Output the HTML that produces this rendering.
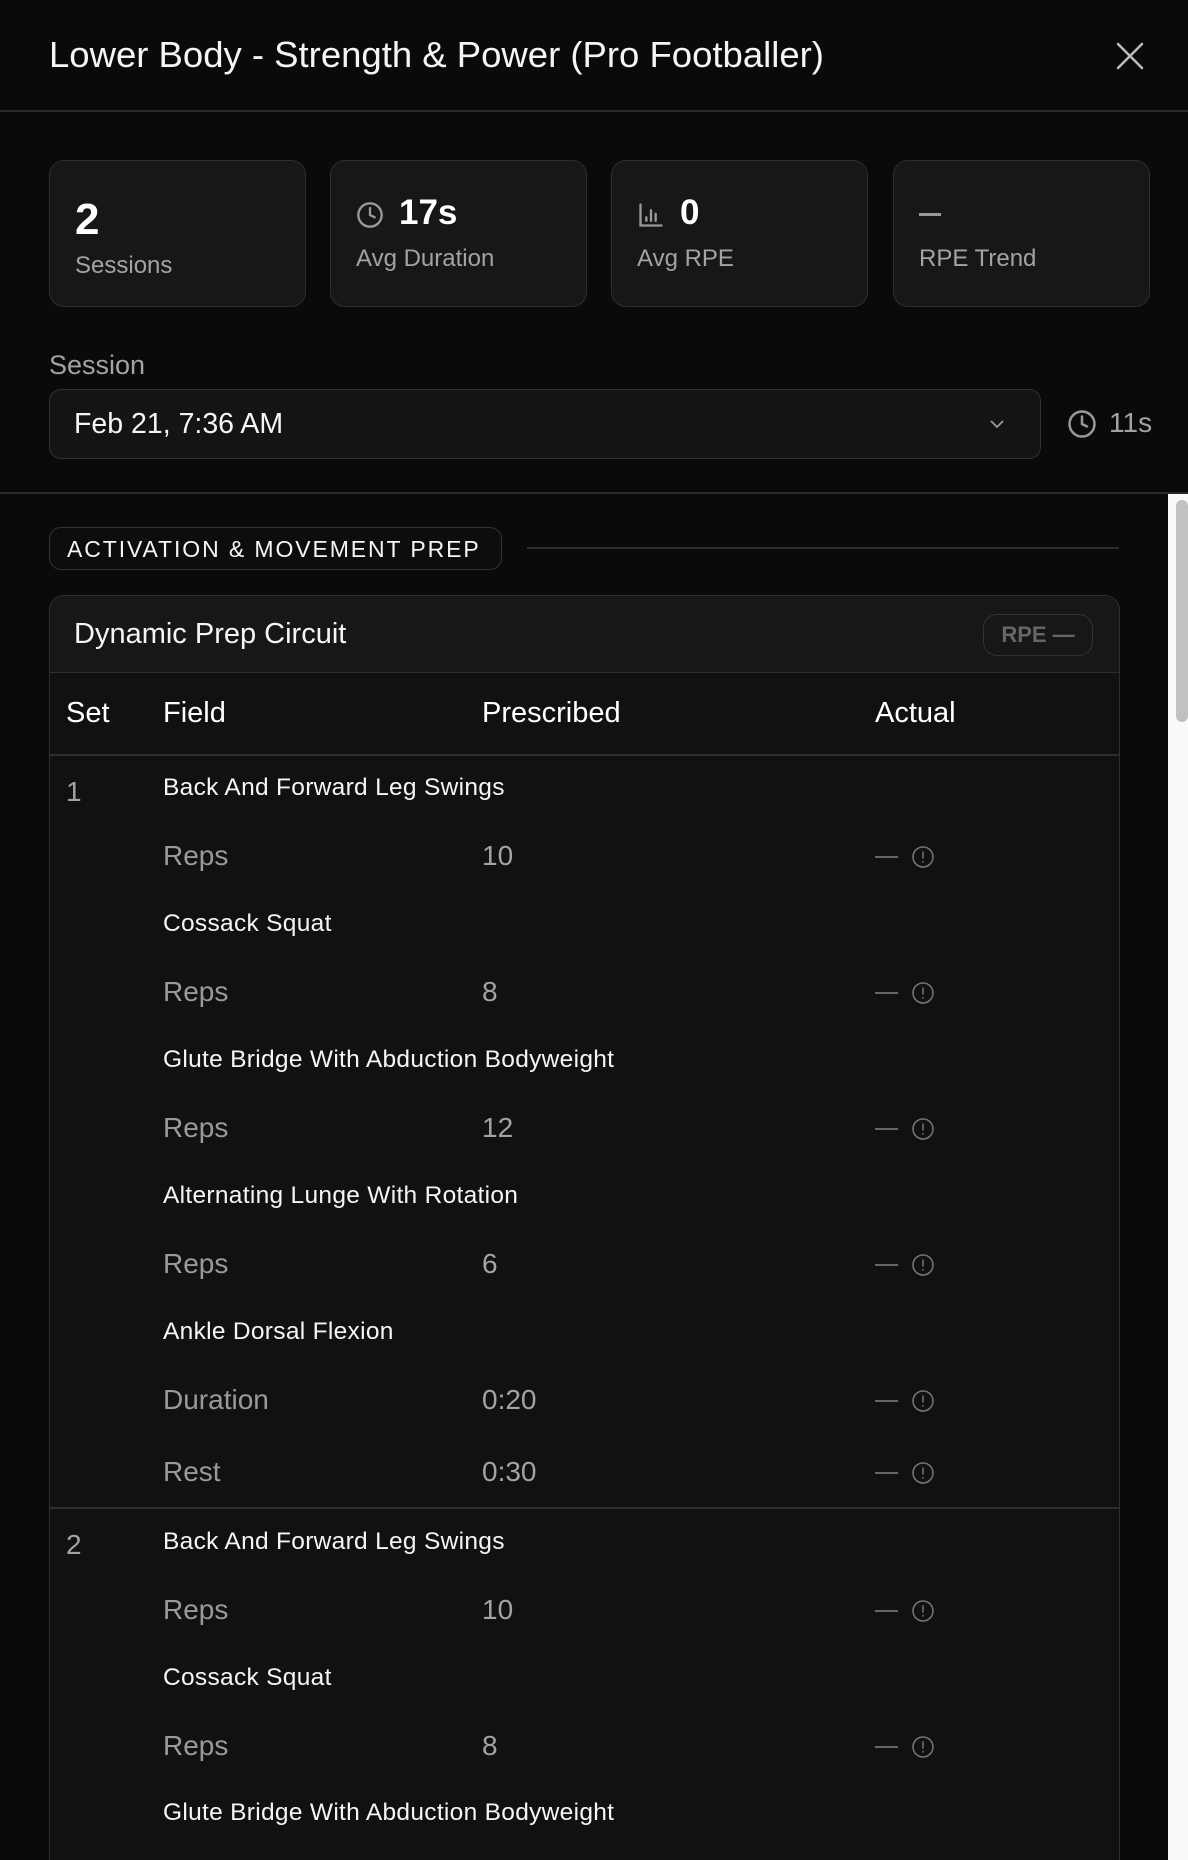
<!DOCTYPE html>
<html><head><meta charset="utf-8"><style>
*{margin:0;padding:0;box-sizing:border-box}
html,body{width:1188px;height:1860px;overflow:hidden;background:#0a0a0a}
body{font-family:"Liberation Sans",sans-serif;color:#fff}
#w{position:relative;width:1188px;height:1860px;overflow:hidden}
.a{position:absolute;white-space:nowrap}
.card{position:absolute;top:160px;height:147px;width:257px;background:#171717;border:1.5px solid #2e2e2e;border-radius:15px}
.lbl{color:#a3a3a3;font-size:24px}
.ex{font-size:24.5px;color:#f5f5f5;letter-spacing:.3px}
.f{font-size:28px;color:#9a9a9a}
.v{font-size:28px;color:#a3a3a3}
.h{font-size:29px}
</style></head><body><div id="w">
<div class="a" style="left:49px;top:34px;font-size:36.5px;color:#f5f5f5">Lower Body - Strength &amp; Power (Pro Footballer)</div>
<svg class="a" style="left:1115px;top:41px" width="30" height="30" viewBox="0 0 30 30"><path d="M3 3L27 27M27 3L3 27" stroke="#bbb" stroke-width="2.6" stroke-linecap="round"/></svg>
<div class="a" style="left:0;top:110px;width:1188px;height:1.5px;background:#2a2a2a"></div>

<div class="card" style="left:49px"><div class="a" style="left:25px;top:34px;font-size:44px;font-weight:bold">2</div><div class="a lbl" style="left:25px;top:91px">Sessions</div></div>
<div class="card" style="left:330px"><svg class="a" style="left:25px;top:40px" width="28" height="28" viewBox="0 0 24 24" fill="none" stroke="#999" stroke-width="2" stroke-linecap="round"><circle cx="12" cy="12" r="10"/><path d="M12 6v6l4 2"/></svg><div class="a" style="left:68px;top:32px;font-size:35px;font-weight:bold">17s</div><div class="a lbl" style="left:25px;top:84px">Avg Duration</div></div>
<div class="card" style="left:611px"><svg class="a" style="left:25px;top:40px" width="28" height="28" viewBox="0 0 24 24" fill="none" stroke="#999" stroke-width="2" stroke-linecap="round"><path d="M3 3v18h18M8 17v-3M12 17V8M16 17v-6"/></svg><div class="a" style="left:68px;top:32px;font-size:35px;font-weight:bold">0</div><div class="a lbl" style="left:25px;top:84px">Avg RPE</div></div>
<div class="card" style="left:893px"><div class="a" style="left:25px;top:52px;width:22px;height:2.5px;background:#999"></div><div class="a lbl" style="left:25px;top:84px">RPE Trend</div></div>

<div class="a" style="left:49px;top:350px;font-size:27px;color:#a3a3a3">Session</div>
<div class="a" style="left:49px;top:389px;width:992px;height:70px;background:#141414;border:1.5px solid #333;border-radius:12px"><div class="a" style="left:24px;top:18px;font-size:28.5px;color:#f5f5f5">Feb 21, 7:36 AM</div><svg class="a" style="left:938px;top:25px" width="18" height="18" viewBox="0 0 18 18"><path d="M3 6l6 6 6-6" stroke="#999" stroke-width="1.8" fill="none"/></svg></div>
<svg class="a" style="left:1067px;top:409px" width="30" height="30" viewBox="0 0 24 24" fill="none" stroke="#999" stroke-width="2" stroke-linecap="round"><circle cx="12" cy="12" r="10"/><path d="M12 6v6l4 2"/></svg>
<div class="a" style="left:1109px;top:407px;font-size:28px;color:#a3a3a3">11s</div>
<div class="a" style="left:0;top:492px;width:1188px;height:1.5px;background:#2a2a2a"></div>

<div class="a" style="left:1168px;top:494px;width:20px;height:1366px;background:#fafafa"></div>
<div class="a" style="left:1176px;top:500px;width:12px;height:222px;background:#c1c1c1;border-radius:6px"></div>

<div class="a" style="left:49px;top:527px;width:453px;height:43px;border:1.5px solid #333;border-radius:12px;background:#0d0d0d"><div class="a" style="left:17px;top:8px;font-size:23px;letter-spacing:1.9px;color:#f5f5f5">ACTIVATION &amp; MOVEMENT PREP</div></div>
<div class="a" style="left:527px;top:547px;width:592px;height:1.5px;background:#2e2e2e"></div>

<div class="a" style="left:49px;top:595px;width:1071px;height:1300px;background:#111;border:1.5px solid #2e2e2e;border-radius:15px;overflow:hidden">
 <div class="a" style="left:0;top:0;width:1071px;height:77px;background:#171717;border-bottom:1.5px solid #2e2e2e"></div>
 <div class="a" style="left:24px;top:22px;font-size:29px;color:#f5f5f5">Dynamic Prep Circuit</div>
 <div class="a" style="left:933px;top:18px;width:110px;height:42px;border:1.5px solid #333;border-radius:14px;font-size:22px;font-weight:bold;color:#666;text-align:center;line-height:39px">RPE —</div>
 <div class="a" style="left:0;top:158px;width:1071px;height:1.5px;background:#2e2e2e"></div>
</div>
<div class="a h" style="left:66px;top:697px">Set</div>
<div class="a h" style="left:163px;top:697px">Field</div>
<div class="a h" style="left:482px;top:697px">Prescribed</div>
<div class="a h" style="left:875px;top:697px">Actual</div>

<div id="rows"></div>
<div class="a" style="left:50px;top:1507px;width:1069px;height:1.5px;background:#2e2e2e"></div>
<div class="a v" style="left:66px;top:776px">1</div>
<div class="a v" style="left:66px;top:1529px">2</div>
</div>
<script>
var d=[
["ex","Back And Forward Leg Swings",774],["r","Reps","10",840],
["ex","Cossack Squat",910],["r","Reps","8",976],
["ex","Glute Bridge With Abduction Bodyweight",1046],["r","Reps","12",1112],
["ex","Alternating Lunge With Rotation",1182],["r","Reps","6",1248],
["ex","Ankle Dorsal Flexion",1318],["r","Duration","0:20",1384],["r","Rest","0:30",1456],
["ex","Back And Forward Leg Swings",1528],["r","Reps","10",1594],
["ex","Cossack Squat",1664],["r","Reps","8",1730],
["ex","Glute Bridge With Abduction Bodyweight",1799]];
var h="";
d.forEach(function(x){
 if(x[0]=="ex")h+='<div class="a ex" style="left:163px;top:'+x[2]+'px">'+x[1]+'</div>';
 else{var t=x[3];h+='<div class="a f" style="left:163px;top:'+t+'px">'+x[1]+'</div><div class="a v" style="left:482px;top:'+t+'px">'+x[2]+'</div><div class="a" style="left:875px;top:'+(t+16)+'px;width:23px;height:2px;background:#666"></div><svg class="a" style="left:911px;top:'+(t+5)+'px" width="24" height="24" viewBox="0 0 24 24" fill="none" stroke="#777" stroke-width="1.5" stroke-linecap="round"><circle cx="12" cy="12" r="10"/><path d="M12 7v6M12 16.5v.5"/></svg>';}
});
document.getElementById("rows").outerHTML=h;
</script>
</body></html>
